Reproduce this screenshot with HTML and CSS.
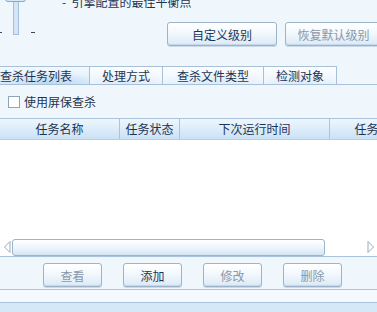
FILE: index.html
```html
<!DOCTYPE html>
<html lang="zh-CN">
<head>
    <meta charset="UTF-8">
    <title>查杀任务列表</title>
    <link rel="stylesheet" href="styles.css">
</head>
<body>

<div class="top">
    <div class="slider">
        <span class="tick"></span>
        <div class="thumb-col">
            <span class="knob"></span>
            <span class="bar"></span>
        </div>
        <span class="tick right"></span>
    </div>
    <div class="top-main">
        <p class="level-note">-&nbsp;&nbsp;引擎配置的最佳平衡点</p>
        <div class="level-actions">
            <button class="btn wide">自定义级别</button>
            <button class="btn wide reset" disabled>恢复默认级别</button>
        </div>
    </div>
</div>

<div class="tabs">
    <div class="tab active t1">查杀任务列表</div>
    <div class="tab t2">处理方式</div>
    <div class="tab t3">查杀文件类型</div>
    <div class="tab t4">检测对象</div>
</div>

<div class="options">
    <span class="check"></span>
    <span>使用屏保查杀</span>
</div>

<div class="grid">
    <div class="grid-head">
        <div class="col c1">任务名称</div>
        <div class="col c2">任务状态</div>
        <div class="col c3">下次运行时间</div>
        <div class="col c4">任务类型</div>
    </div>
    <div class="grid-body"></div>
    <div class="hscroll">
        <svg class="arrow" width="7" height="12" viewBox="0 0 7 12"><polygon points="6,0.5 0.5,6 6,11.5" fill="#fff" stroke="#9aaabb"/></svg>
        <div class="thumb"></div>
        <svg class="arrow right" width="7" height="12" viewBox="0 0 7 12"><polygon points="1,0.5 6.5,6 1,11.5" fill="#fff" stroke="#9aaabb"/></svg>
    </div>
</div>

<div class="actions">
    <button class="btn" disabled>查看</button>
    <button class="btn">添加</button>
    <button class="btn" disabled>修改</button>
    <button class="btn" disabled>删除</button>
</div>
<div class="foot"></div>
<div class="status"></div>

</body>
</html>
```

FILE: styles.css
```css
body {
    margin: 0;
    width: 377px;
    height: 312px;
    overflow: hidden;
    background: #eff7fd;
    font-family: "Noto Sans CJK SC", "DejaVu Sans", sans-serif;
    font-size: 12px;
    color: #1c3553;
}
.top {
    display: flex;
    align-items: flex-start;
    height: 66px;
}
.slider {
    display: flex;
    align-items: flex-end;
    width: 62px;
    height: 41px;
    margin-top: -6px;
    flex-shrink: 0;
}
.tick {
    width: 2px;
    height: 1px;
    background: #3a4a5a;
    margin: 0 3px 2px 0;
}
.tick.right {
    width: 4px;
    margin: 0 0 2px 5px;
}
.thumb-col {
    display: flex;
    flex-direction: column;
    align-items: center;
    width: 21px;
    height: 100%;
}
.knob {
    width: 19px;
    height: 6px;
    border: 1px solid #86a9cc;
    border-radius: 3px;
    background: #d7e8f8;
}
.bar {
    flex: 1;
    width: 4px;
    border: 1px solid #a3c0dc;
    border-top: none;
    background: #d3e5f6;
}
.top-main {
    margin-top: -5px;
}
.level-note {
    margin: 0;
    line-height: 14px;
    color: #1c3553;
}
.level-actions {
    display: flex;
    gap: 8px;
    margin: 13px 0 0 105px;
}
.btn {
    width: 59px;
    height: 24px;
    padding: 0;
    font-family: inherit;
    font-size: 12px;
    color: #1b3756;
    border: 1px solid #9db3c9;
    border-radius: 3px;
    background: linear-gradient(#ffffff, #f3f8fd 45%, #dbe9f6);
    box-shadow: inset 0 -1px 0 #c5d8ea, 0 1px 0 #c9d9e8;
    flex-shrink: 0;
}
.btn.wide {
    width: 110px;
}
.btn.reset {
    width: 97px;
}
.btn:disabled {
    color: #8898a8;
}
.tabs {
    display: flex;
    height: 18px;
    border-bottom: 1px solid #a8c0d8;
}
.tab {
    box-sizing: border-box;
    height: 19px;
    line-height: 17px;
    text-align: center;
    border: 1px solid #a8c0d8;
    border-left: none;
    background: radial-gradient(ellipse 60% 70% at 50% 100%, #d9eaf9, transparent),
                linear-gradient(#fbfdff, #eef5fc);
}
.tab.active {
    background: radial-gradient(ellipse 60% 70% at 55% 100%, #b9d8f3, transparent),
                linear-gradient(#f2f8fe, #dcecfa);
}
.t1 { width: 90px; text-indent: -17px; }
.t2 { width: 73px; }
.t3 { width: 101px; }
.t4 { width: 73px; }
.options {
    display: flex;
    align-items: center;
    gap: 4px;
    height: 33px;
    padding-left: 8px;
}
.check {
    box-sizing: border-box;
    width: 12px;
    height: 12px;
    border: 1px solid #8ea4ba;
    background: #fff;
}
.grid {
    background: #fff;
    border-top: 1px solid #a9c4dc;
    border-bottom: 1px solid #a9c4dc;
    overflow: hidden;
}
.grid-head {
    display: flex;
    height: 20px;
    background: linear-gradient(#eef6fd, #d9eaf8 60%, #cae2f5);
    border-bottom: 1px solid #b7cee2;
}
.col {
    box-sizing: border-box;
    flex-shrink: 0;
    line-height: 20px;
    text-align: center;
    border-right: 1px solid #a9c4dc;
}
.c1 { width: 120px; }
.c2 { width: 60px; }
.c3 { width: 150px; }
.c4 { width: 98px; }
.grid-body {
    height: 98px;
}
.hscroll {
    display: flex;
    align-items: center;
    height: 18px;
    padding-left: 4px;
}
.arrow {
    flex-shrink: 0;
}
.arrow.right {
    margin-left: 42px;
}
.thumb {
    box-sizing: border-box;
    width: 313px;
    height: 17px;
    margin-left: 1px;
    border: 1px solid #9cb3c9;
    border-radius: 3px;
    background: linear-gradient(#ffffff, #eef5fc 50%, #d4e5f4);
}
.actions {
    display: flex;
    gap: 21px;
    height: 26px;
    padding: 6px 0 0 43px;
    border-bottom: 1px solid #a9c4dc;
}
.foot {
    height: 12px;
    background: #f3f9fe;
    border-bottom: 1px solid #a9c4dc;
}
.status {
    height: 20px;
    background: #d4e8f8;
}
```
